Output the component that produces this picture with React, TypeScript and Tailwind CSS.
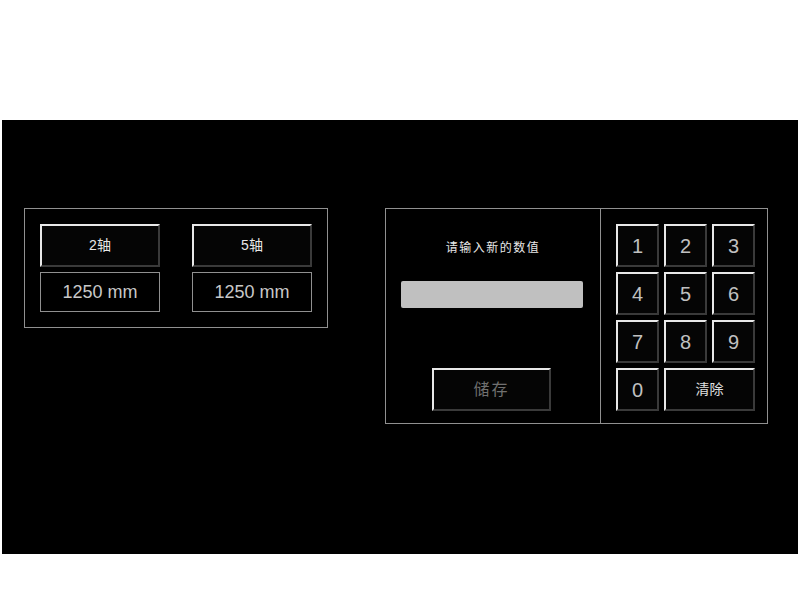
const font = "font-['Liberation_Sans','Noto_Sans_CJK_SC',sans-serif]"
const bevel =
  "border-2 border-t-[#e8e8e8] border-l-[#e8e8e8] border-b-[#3a3a3a] border-r-[#3a3a3a] bg-[#050505] box-border flex items-center justify-center"

function AxisColumn({ label }: { label: string }) {
  return (
    <div className="flex w-[120px] flex-col gap-[5px]">
      <div className={`${bevel} h-[43px] text-[14px] text-[#e8e8e8]`}>{label}</div>
      <div className="box-border flex h-[40px] items-center justify-center border border-[#909090] text-[18px] text-[#c8c8c8]">
        1250 mm
      </div>
    </div>
  )
}

function Key({ children, wide }: { children: React.ReactNode; wide?: boolean }) {
  return (
    <div
      className={`${bevel} h-[43px] ${wide ? "col-span-2 text-[14px] text-[#e0e0e0]" : "text-[20px] text-[#c0c0c0]"}`}
    >
      {children}
    </div>
  )
}

export default function App() {
  return (
    <div className={`h-[600px] w-[800px] bg-white ${font}`}>
      <div className="h-[120px]" />
      <div className="mx-[2px] flex h-[434px] items-start bg-black pl-[22px] pt-[88px]">
        {/* Axis panel */}
        <div className="box-border flex h-[120px] w-[304px] gap-[32px] border border-[#909090] px-[15px] pt-[15px]">
          <AxisColumn label="2轴" />
          <AxisColumn label="5轴" />
        </div>

        {/* Input panel */}
        <div className="ml-[57px] box-border flex h-[216px] w-[383px] items-start border border-[#909090]">
          <div className="box-border flex h-full w-[215px] flex-col items-start border-r border-[#909090]">
            <p className="mt-[31px] self-center text-[12px] leading-[16px] tracking-[1.5px] text-[#e8e8e8]">
              请输入新的数值
            </p>
            <div className="ml-[15px] mt-[25px] h-[27px] w-[182px] rounded-[2px] bg-[#c0c0c0]" />
            <div className={`${bevel} ml-[46px] mt-[60px] h-[43px] w-[119px] text-[16px] tracking-[2px] text-[#707070]`}>
              储存
            </div>
          </div>
          <div className="grid grid-cols-[43px_43px_43px] content-start gap-[5px] pl-[15px] pt-[15px]">
            {["1", "2", "3", "4", "5", "6", "7", "8", "9", "0"].map((k) => (
              <Key key={k}>{k}</Key>
            ))}
            <Key wide>清除</Key>
          </div>
        </div>
      </div>
    </div>
  )
}
